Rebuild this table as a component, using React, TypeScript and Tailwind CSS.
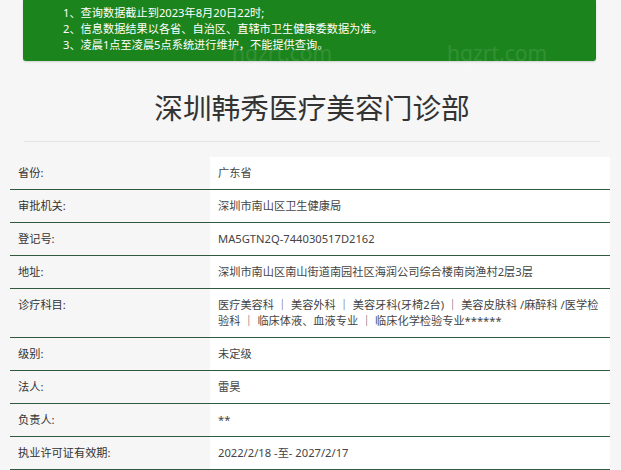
import React from "react";

const notices = [
  "1、查询数据截止到2023年8月20日22时;",
  "2、信息数据结果以各省、自治区、直辖市卫生健康委数据为准。",
  "3、凌晨1点至凌晨5点系统进行维护，不能提供查询。",
];

const rows: { label: string; value: string }[] = [
  { label: "省份:", value: "广东省" },
  { label: "审批机关:", value: "深圳市南山区卫生健康局" },
  { label: "登记号:", value: "MA5GTN2Q-744030517D2162" },
  { label: "地址:", value: "深圳市南山区南山街道南园社区海润公司综合楼南岗渔村2层3层" },
  {
    label: "诊疗科目:",
    value:
      "医疗美容科 ｜ 美容外科 ｜ 美容牙科(牙椅2台) ｜ 美容皮肤科 /麻醉科 /医学检验科 ｜ 临床体液、血液专业 ｜ 临床化学检验专业******",
  },
  { label: "级别:", value: "未定级" },
  { label: "法人:", value: "雷昊" },
  { label: "负责人:", value: "**" },
  { label: "执业许可证有效期:", value: "2022/2/18 -至- 2027/2/17" },
];

export default function App() {
  return (
    <div className="h-[470px] overflow-hidden bg-[#f6f6f6] font-['Noto_Sans','Noto_Sans_CJK_SC',sans-serif]">
      <div className="relative ml-[23px] h-[61px] w-[573px] rounded-b-[3px] bg-[#1b841d] pl-[40px] pt-[5px] text-[11.2px] leading-[16px] text-white shadow-[0_1px_2px_rgba(0,0,0,0.15)]">
        {notices.map((n) => (
          <div key={n}>{n}</div>
        ))}
        <span className="pointer-events-none absolute left-[209px] top-[42px] text-[21px] leading-[22px] text-white/10">hgzrt.com</span>
        <span className="pointer-events-none absolute left-[424px] top-[42px] text-[21px] leading-[22px] text-white/10">hgzrt.com</span>
      </div>

      <div className="mx-[24px] w-[576px] border-b border-[#e4e4e4] pb-[15px] pt-[29px] text-center text-[28.7px] leading-[36px] text-[#333]">
        深圳韩秀医疗美容门诊部
      </div>

      <div className="ml-[10px] mt-[15px] w-[600px]">
        {rows.map((r) => (
          <div key={r.label} className="grid grid-cols-[200px_400px] border-b border-[#2f5a3e] text-[11.2px] leading-[16px]">
            <div className="py-[8px] pl-[8px] text-[#333]">{r.label}</div>
            <div className="bg-white py-[8px] pl-[8px] pr-[8px] text-[#444]">{r.value}</div>
          </div>
        ))}
      </div>
    </div>
  );
}
